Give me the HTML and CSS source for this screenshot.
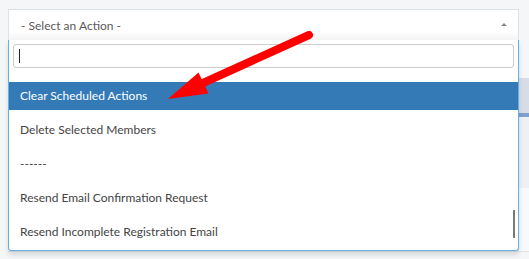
FILE: index.html
```html
<!DOCTYPE html>
<html lang="en">
<head>
  <meta charset="UTF-8">
  <title>Select an Action</title>
  <link rel="stylesheet" href="styles.css">
</head>
<body>
  <div class="select-wrap">
    <div class="select-box">
      <span class="select-text">- Select an Action -</span>
      <span class="select-caret"></span>
    </div>

    <div class="dropdown">
      <div class="search">
        <div class="search-input"><span class="text-caret"></span></div>
      </div>
      <ul class="results">
        <li class="result highlighted">Clear Scheduled Actions</li>
        <li class="result">Delete Selected Members</li>
        <li class="result">------</li>
        <li class="result">Resend Email Confirmation Request</li>
        <li class="result">Resend Incomplete Registration Email</li>
      </ul>
      <div class="scroll-thumb"></div>
    </div>
  </div>

  <!-- page content behind the open dropdown -->
  <div class="panel">
    <div class="panel-head"></div>
    <div class="panel-row"></div>
    <div class="panel-row alt"></div>
  </div>

  <svg class="annotation" width="529" height="259" viewBox="0 0 529 259">
    <line x1="309" y1="35" x2="203" y2="83" stroke="#ff0000" stroke-width="8" stroke-linecap="round" />
    <polygon points="168,99 198.5,72.5 208.5,93.5" fill="#ff0000" />
  </svg>
</body>
</html>
```

FILE: styles.css
```css
:root {
  --page-bg: #f5f6f8;
  --border-color: #dde2e8;
  --focus-border: #66afe9;
  --highlight: #337ab7;
  --text-color: #444;
  --muted-text: #5a5a5a;
}

body {
  margin: 0;
  background-color: var(--page-bg);
  font-family: Lato, "Open Sans", sans-serif;
  font-size: 12px;
  color: var(--text-color);
  position: relative;
  width: 529px;
  height: 259px;
  overflow: hidden;
}

.select-wrap {
  position: relative;
  margin: 9px 10px 0 8px;
  z-index: 2;
}

.select-box {
  display: flex;
  align-items: center;
  justify-content: space-between;
  height: 31px;
  box-sizing: border-box;
  padding: 0 11px 0 12px;
  border: 1px solid var(--border-color);
  border-bottom: none;
  background: linear-gradient(to bottom, #ffffff 0%, #ffffff 70%, #f4f4f4 100%);
}

.select-text {
  color: var(--muted-text);
}

.select-caret {
  width: 0;
  height: 0;
  border-left: 3px solid transparent;
  border-right: 3px solid transparent;
  border-bottom: 3px solid #888;
  margin-top: -1px;
}

.dropdown {
  position: absolute;
  top: 31px;
  left: 0;
  right: 0;
  background-color: #fff;
  border: 1px solid var(--focus-border);
  border-top: none;
  border-radius: 0 0 3px 3px;
  box-shadow: 0 4px 5px rgba(0, 0, 0, 0.12);
}

.search {
  padding: 4px;
}

.search-input {
  display: flex;
  align-items: center;
  height: 24px;
  box-sizing: border-box;
  padding-left: 5px;
  border: 1px solid #cccccc;
  border-radius: 3px;
}

.text-caret {
  width: 1px;
  height: 14px;
  background-color: #222;
}

.results {
  list-style: none;
  margin: 0;
  padding: 10px 0 4px;
}

.result {
  height: 28px;
  line-height: 28px;
  padding-left: 11px;
  margin-bottom: 6px;
  color: var(--text-color);
}

.result:last-child {
  margin-bottom: 0;
}

.result.highlighted {
  background-color: var(--highlight);
  color: #fff;
}

.scroll-thumb {
  position: absolute;
  right: 3px;
  top: 170px;
  width: 2px;
  height: 28px;
  background-color: #7a7a7a;
}

.panel {
  margin: 38px 0 0 8px;
}

.panel-head {
  height: 35px;
  background-color: #d6dde7;
  border-bottom: 4px solid #7ea0cb;
}

.panel-row {
  height: 71px;
  background-color: #eef0f4;
}

.panel-row.alt {
  height: 63px;
  background-color: #f8f9fb;
  border-bottom: 1px solid #e2e4e8;
}

.annotation {
  position: absolute;
  top: 0;
  left: 0;
  z-index: 3;
  pointer-events: none;
}
```
